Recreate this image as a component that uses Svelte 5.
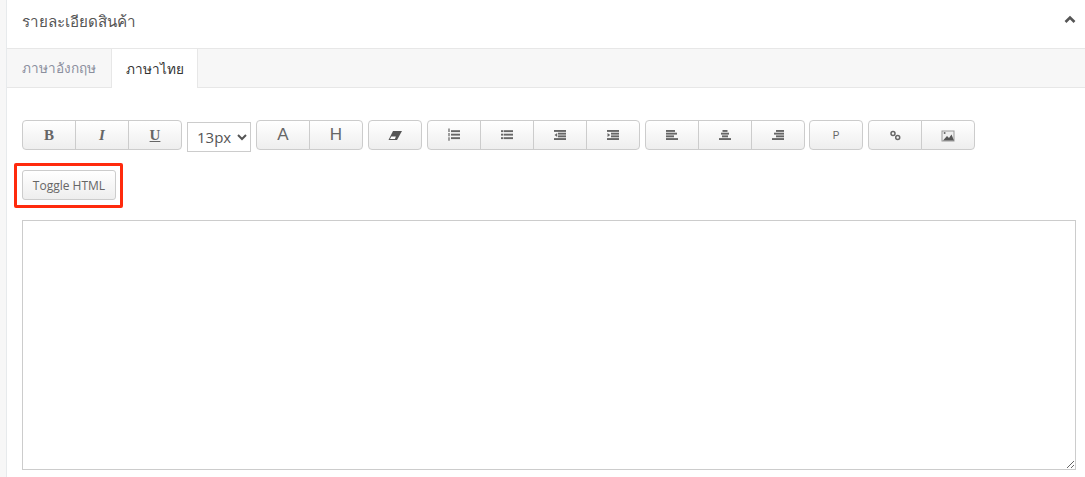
<script>
	const groups = [
		[{ label: 'B', cls: 'bold' }, { label: 'I', cls: 'italic' }, { label: 'U', cls: 'under' }],
		'select',
		[{ label: 'A', cls: 'big' }, { label: 'H', cls: 'big' }],
		[{ icon: 'eraser' }],
		[{ icon: 'ol' }, { icon: 'ul' }, { icon: 'outdent' }, { icon: 'indent' }],
		[{ icon: 'left' }, { icon: 'center' }, { icon: 'right' }],
		[{ label: 'P', cls: 'small' }],
		[{ icon: 'link' }, { icon: 'image' }]
	];

	// x offset, width per bar of the 14px line icons
	const lines = {
		left: [[1, 9], [1, 11], [1, 8], [1, 12]],
		center: [[4.5, 5], [3, 8], [4, 6], [1, 12]],
		right: [[5, 8], [3, 10], [5, 8], [1, 12]],
		ul: [[4, 9], [4, 9], [4, 9]],
		ol: [[4, 9], [4, 9], [4, 9]],
		outdent: [[1, 12], [5, 8], [5, 8], [1, 12]],
		indent: [[1, 12], [5, 8], [5, 8], [1, 12]]
	};

	function isList(icon) {
		return icon === 'ul' || icon === 'ol';
	}
</script>

<div class="page">
	<section class="panel">
		<header class="panel-head">
			<h2>รายละเอียดสินค้า</h2>
			<svg class="chevron" width="12" height="9" viewBox="0 0 12 9">
				<path d="M1.5 7 6 2.5 10.5 7" fill="none" stroke="#555" stroke-width="2.6" />
			</svg>
		</header>

		<div class="tabs">
			<span class="tab">ภาษาอังกฤษ</span>
			<span class="tab active">ภาษาไทย</span>
		</div>

		<div class="body">
			<div class="toolbar">
				{#each groups as group}
					{#if group === 'select'}
						<select class="size">
							<option>13px</option>
						</select>
					{:else}
						<div class="group">
							{#each group as btn}
								<button class="tool {btn.cls ?? ''}" type="button">
									{#if btn.label}
										{btn.label}
									{:else if btn.icon === 'eraser'}
										<svg width="14" height="14" viewBox="0 0 14 14">
											<path d="M5 3h9l-5 9H0.5z" fill="#555" />
											<path d="M3.3 8.4h4.6L6.9 11H2z" fill="#fff" />
										</svg>
									{:else if btn.icon === 'link'}
										<svg width="14" height="14" viewBox="0 0 14 14">
											<circle cx="5" cy="5.5" r="2" fill="none" stroke="#666" stroke-width="1.5" />
											<circle cx="9.7" cy="9.5" r="2" fill="none" stroke="#666" stroke-width="1.5" />
										</svg>
									{:else if btn.icon === 'image'}
										<svg width="14" height="14" viewBox="0 0 14 14">
											<rect x="1" y="3" width="12" height="10" fill="#eee" stroke="#999" />
											<path d="M2 12.5 6 8l2 2 2.5-3.5 2.5 6z" fill="#555" />
											<circle cx="3.6" cy="5" r="1" fill="#666" />
										</svg>
									{:else}
										<svg width="14" height="14" viewBox="0 0 14 14">
											{#each lines[btn.icon] as [x, w], i}
												<rect {x} y={isList(btn.icon) ? 2.2 + i * 3.5 : 2 + i * 2.7} width={w} height="1.9" fill="#666" />
											{/each}
											{#if btn.icon === 'ul'}
												{#each [2.2, 5.7, 9.2] as y}
													<rect x="1" {y} width="2.4" height="1.9" fill="#666" />
												{/each}
											{:else if btn.icon === 'ol'}
												<path d="M2 0.5v13" stroke="#777" stroke-width="1.4" stroke-dasharray="3.4 1" />
											{:else if btn.icon === 'outdent'}
												<path d="M4.2 5v4L1.5 7z" fill="#666" />
											{:else if btn.icon === 'indent'}
												<path d="M1.5 5v4L4.2 7z" fill="#666" />
											{/if}
										</svg>
									{/if}
								</button>
							{/each}
						</div>
					{/if}
				{/each}
			</div>

			<div class="html-row">
				<button class="tool toggle" type="button">Toggle HTML</button>
			</div>

			<textarea class="editor"></textarea>
		</div>
	</section>
</div>

<style>
	:global(body) {
		margin: 0;
		background: #fff;
	}

	.page {
		height: 477px;
		overflow: hidden;
		padding-left: 6px;
		background: #f7f7f7;
		font-family: "Open Sans", "Noto Sans", sans-serif;
	}

	.panel {
		height: 100%;
		background: #fff;
		border-left: 1px solid #e7eaec;
	}

	.panel-head {
		height: 48px;
		box-sizing: border-box;
		display: flex;
		align-items: center;
		justify-content: space-between;
		padding: 0 9px 4px 15px;
	}

	.panel-head h2 {
		margin: 0;
		font-size: 15.2px;
		font-weight: 400;
		color: #555;
	}

	.chevron {
		margin-bottom: 6px;
	}

	.tabs {
		display: flex;
		height: 40px;
		box-sizing: border-box;
		background: #f7f7f7;
		border-top: 1px solid #e7e7e7;
		border-bottom: 1px solid #e7e7e7;
	}

	.tab {
		display: flex;
		align-items: center;
		justify-content: center;
		width: 104px;
		font-size: 13.6px;
		color: #8b8f9e;
	}

	.tab.active {
		width: 85px;
		height: 39px;
		background: #fff;
		color: #333;
		border-left: 1px solid #e7e7e7;
		border-right: 1px solid #e7e7e7;
	}

	.body {
		padding: 32px 9px 0 15px;
	}

	.toolbar {
		display: flex;
		align-items: flex-start;
		gap: 5px;
	}

	.group {
		display: flex;
	}

	/* the paragraph button sits a pixel closer to the align group */
	.group:nth-last-child(2) {
		margin-left: -1px;
	}

	.tool {
		width: 52px;
		height: 28px;
		margin: 0 0 0 -1px;
		padding: 0;
		display: flex;
		align-items: center;
		justify-content: center;
		box-sizing: content-box;
		color: #666;
		background: linear-gradient(#fff, #eee);
		border: 1px solid #ccc;
		font-family: "Liberation Sans", sans-serif;
		font-size: 12px;
	}

	.group .tool:first-child {
		margin-left: 0;
		border-radius: 4px 0 0 4px;
	}

	.group .tool:last-child {
		border-radius: 0 4px 4px 0;
	}

	.group .tool:only-child {
		border-radius: 4px;
	}

	.bold,
	.italic,
	.under {
		font-family: "Liberation Serif", serif;
		font-size: 15px;
		font-weight: 700;
	}

	.italic {
		font-style: italic;
	}

	.under {
		text-decoration: underline;
	}

	.big {
		font-size: 17px;
	}

	.small {
		font-size: 10px;
	}

	.size {
		width: 64px;
		height: 30px;
		margin-top: 2px;
		padding: 0 0 0 5px;
		background: #fff;
		border: 1px solid #ccc;
		color: #555;
		font-family: "Open Sans", sans-serif;
		font-size: 15px;
	}

	.html-row {
		position: relative;
		width: fit-content;
		margin-top: 18px;
	}

	/* red annotation drawn over the screenshot */
	.html-row::after {
		content: "";
		position: absolute;
		left: -8px;
		top: -7px;
		right: -7px;
		bottom: -8px;
		border: 3px solid #ff2a0d;
		border-radius: 2px;
		pointer-events: none;
	}

	.tool.toggle {
		width: 92px;
		margin: 0;
		border-radius: 3px;
		font-family: "Open Sans", sans-serif;
		font-size: 12px;
	}

	.editor {
		display: block;
		width: 1054px;
		height: 250px;
		box-sizing: border-box;
		margin-top: 20px;
		border: 1px solid #ccc;
		background: #fff;
		outline: none;
	}
</style>
